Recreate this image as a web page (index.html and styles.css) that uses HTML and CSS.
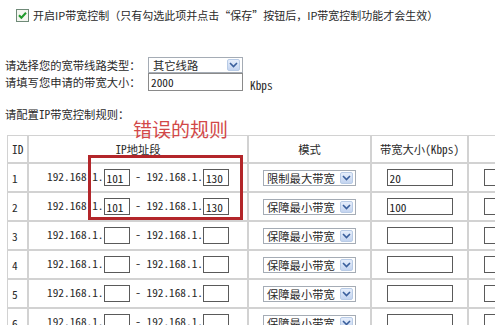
FILE: index.html
```html
<!DOCTYPE html>
<html lang="zh-CN">
<head>
    <meta charset="UTF-8">
    <title>IP带宽控制</title>
    <link rel="stylesheet" href="styles.css">
</head>
<body>
    <div class="enable">
        <span class="check">
            <svg width="13" height="13" viewBox="0 0 13 13">
                <rect x="0.5" y="0.5" width="12" height="12" fill="#f4f6f0" stroke="#6f8a78"/>
                <path d="M3 6.2 L5.4 8.8 L10 3.8" fill="none" stroke="#1f9a2a" stroke-width="2"/>
            </svg>
        </span>
        <span>开启IP带宽控制（只有勾选此项并点击“保存”按钮后，IP带宽控制功能才会生效）</span>
    </div>

    <div class="settings">
        <label>请选择您的宽带线路类型：</label>
        <div class="select line-type">
            <span>其它线路</span>
            <span class="arrow"><svg width="9" height="6" viewBox="0 0 9 6"><path d="M1 1 L4.5 4.5 L8 1" fill="none" stroke="#3a5f9c" stroke-width="1.6"/></svg></span>
        </div>
        <span></span>
        <label>请填写您申请的带宽大小：</label>
        <input class="field total" type="text" value="2000">
        <span class="unit">Kbps</span>
    </div>

    <p class="rules-title">请配置IP带宽控制规则：</p>

    <div class="rules">
        <table>
            <colgroup>
                <col class="c-id"><col class="c-ip"><col class="c-mode"><col class="c-bw"><col class="c-more">
            </colgroup>
            <tr class="head">
                <td class="id">ID</td>
                <td>IP地址段</td>
                <td>模式</td>
                <td>带宽大小(Kbps)</td>
                <td></td>
            </tr>
            <tr>
                <td class="id">1</td>
                <td>192.168.1.<input class="field ip" value="101"> - 192.168.1.<input class="field ip" value="130"></td>
                <td><div class="select mode"><span>限制最大带宽</span><span class="arrow"><svg width="9" height="6" viewBox="0 0 9 6"><path d="M1 1 L4.5 4.5 L8 1" fill="none" stroke="#3a5f9c" stroke-width="1.6"/></svg></span></div></td>
                <td><input class="field bw" value="20"></td>
                <td><input class="field bw" value=""></td>
            </tr>
            <tr>
                <td class="id">2</td>
                <td>192.168.1.<input class="field ip" value="101"> - 192.168.1.<input class="field ip" value="130"></td>
                <td><div class="select mode"><span>保障最小带宽</span><span class="arrow"><svg width="9" height="6" viewBox="0 0 9 6"><path d="M1 1 L4.5 4.5 L8 1" fill="none" stroke="#3a5f9c" stroke-width="1.6"/></svg></span></div></td>
                <td><input class="field bw" value="100"></td>
                <td><input class="field bw" value=""></td>
            </tr>
            <tr>
                <td class="id">3</td>
                <td>192.168.1.<input class="field ip" value=""> - 192.168.1.<input class="field ip" value=""></td>
                <td><div class="select mode"><span>保障最小带宽</span><span class="arrow"><svg width="9" height="6" viewBox="0 0 9 6"><path d="M1 1 L4.5 4.5 L8 1" fill="none" stroke="#3a5f9c" stroke-width="1.6"/></svg></span></div></td>
                <td><input class="field bw" value=""></td>
                <td><input class="field bw" value=""></td>
            </tr>
            <tr>
                <td class="id">4</td>
                <td>192.168.1.<input class="field ip" value=""> - 192.168.1.<input class="field ip" value=""></td>
                <td><div class="select mode"><span>保障最小带宽</span><span class="arrow"><svg width="9" height="6" viewBox="0 0 9 6"><path d="M1 1 L4.5 4.5 L8 1" fill="none" stroke="#3a5f9c" stroke-width="1.6"/></svg></span></div></td>
                <td><input class="field bw" value=""></td>
                <td><input class="field bw" value=""></td>
            </tr>
            <tr>
                <td class="id">5</td>
                <td>192.168.1.<input class="field ip" value=""> - 192.168.1.<input class="field ip" value=""></td>
                <td><div class="select mode"><span>保障最小带宽</span><span class="arrow"><svg width="9" height="6" viewBox="0 0 9 6"><path d="M1 1 L4.5 4.5 L8 1" fill="none" stroke="#3a5f9c" stroke-width="1.6"/></svg></span></div></td>
                <td><input class="field bw" value=""></td>
                <td><input class="field bw" value=""></td>
            </tr>
            <tr>
                <td class="id">6</td>
                <td>192.168.1.<input class="field ip" value=""> - 192.168.1.<input class="field ip" value=""></td>
                <td><div class="select mode"><span>保障最小带宽</span><span class="arrow"><svg width="9" height="6" viewBox="0 0 9 6"><path d="M1 1 L4.5 4.5 L8 1" fill="none" stroke="#3a5f9c" stroke-width="1.6"/></svg></span></div></td>
                <td><input class="field bw" value=""></td>
                <td><input class="field bw" value=""></td>
            </tr>
        </table>

        <!-- 标注：错误的规则 -->
        <span class="note">错误的规则</span>
        <div class="mark"></div>
    </div>
</body>
</html>
```

FILE: styles.css
```css
body {
    margin: 0;
    width: 495px;
    height: 325px;
    overflow: hidden;
    background: #fff;
    color: #2a2a2a;
    font: 11.3px/14px "Noto Sans CJK SC", sans-serif;
    font-feature-settings: "hwid";
}

.enable {
    display: flex;
    align-items: center;
    gap: 4px;
    height: 14px;
    padding: 8px 0 0 16px;
    font-size: 11px;
    font-feature-settings: normal;
}

.check {
    display: flex;
}

.settings {
    display: grid;
    grid-template-columns: 143px 95px auto;
    grid-template-rows: 16px 18px;
    align-items: center;
    margin-top: 35px;
    padding-left: 5px;
}

.unit {
    margin-left: 7px;
    padding-top: 5px;
}

/* 下拉框 */
.select {
    display: flex;
    align-items: center;
    justify-content: space-between;
    box-sizing: border-box;
    height: 16px;
    padding: 0 2px 0 3px;
    border: 1px solid #a5acb5;
    background: #fff;
}

.select .arrow {
    display: flex;
    align-items: center;
    justify-content: center;
    width: 13px;
    height: 12px;
    border: 1px solid #b8cbe6;
    border-radius: 2px;
    box-sizing: border-box;
    background: linear-gradient(#e6eefb, #c3d4f0);
}

.line-type {
    width: 95px;
    height: 16px;
    padding-left: 4px;
}

.mode {
    width: 93px;
    margin: 0 auto;
}

/* 输入框 */
.field {
    box-sizing: border-box;
    margin: 0;
    padding: 0 2px;
    height: 17px;
    border: 1px solid #5a5a5a;
    background: #fff;
    color: #222;
    font: 11.3px "Noto Sans CJK SC", sans-serif;
    font-feature-settings: "hwid";
    vertical-align: middle;
    outline: none;
}

.total {
    width: 95px;
    height: 18px;
    border-color: #8a8a8a;
}

.ip {
    width: 26px;
}

.bw {
    width: 66px;
}

.rules-title {
    margin: 16px 0 0 5px;
    line-height: 14px;
}

.rules {
    position: relative;
    margin: 14px 0 0 7px;
}

table {
    width: 558px;
    table-layout: fixed;
    border-collapse: separate;
    border-spacing: 0;
}

.c-id { width: 21px; }
.c-ip { width: 220px; }
.c-mode { width: 123px; }
.c-bw { width: 97px; }
.c-more { width: 97px; }

tr {
    height: 29px;
}

tr.head {
    height: 28px;
}

td {
    padding: 0;
    border: 1px solid #d2d2d2;
    text-align: center;
    vertical-align: middle;
    white-space: nowrap;
}

td.id {
    text-align: left;
    padding-left: 4px;
}

.note {
    position: absolute;
    left: 126px;
    top: -17px;
    color: #d24848;
    font-size: 19px;
    line-height: 22px;
    font-feature-settings: normal;
}

.mark {
    position: absolute;
    left: 81px;
    top: 20px;
    width: 155px;
    height: 65px;
    box-sizing: border-box;
    border: 3px solid #b3262a;
}
```
